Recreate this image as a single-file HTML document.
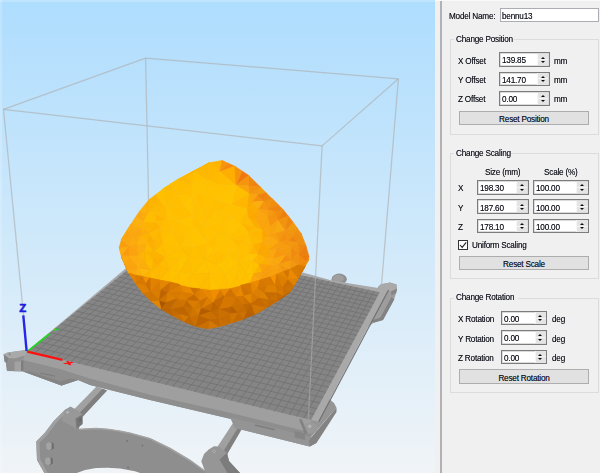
<!DOCTYPE html>
<html><head><meta charset="utf-8"><title>Model View</title>
<style>
html,body{margin:0;padding:0;width:600px;height:473px;overflow:hidden;background:#f0f0f0}
#root{position:relative;width:600px;height:473px;overflow:hidden;font-family:"Liberation Sans",sans-serif}
#vp{position:absolute;left:0;top:0;width:435px;height:473px;background:linear-gradient(#aeddfe 0%,#f0f4f7 100%);overflow:hidden}
#vp svg{position:absolute;left:0;top:0}
#vp .edgeL{position:absolute;left:0;top:0;width:2px;height:473px;background:rgba(255,255,255,.2)}
#vp .edgeT{position:absolute;left:0;top:0;width:435px;height:2px;background:rgba(255,255,255,.22)}
#split{position:absolute;left:440px;top:0;width:1.8px;height:473px;background:#b2b2b6}
#topw{position:absolute;left:435px;top:0;width:165px;height:1.4px;background:#fafafa}
#pn{position:absolute;left:0;top:0;width:600px;height:473px}
.t{position:absolute;white-space:nowrap;font-size:9.8px;line-height:13px;height:13px;color:#14141c;transform:scaleX(.835);transform-origin:0 50%;letter-spacing:-0.25px;text-shadow:0 0 0.6px rgba(10,10,30,.6)}
.t.v{left:2px;top:50%;margin-top:-6.2px}
.t.c{left:50%;top:50%;margin-top:-6.0px;transform:translateX(-50%) scaleX(.835);transform-origin:50% 50%}
.sp,.inp{position:absolute;box-sizing:border-box;background:#fff;border:1px solid #7c7c7c;box-shadow:inset 0 0 0 0.7px #cfcfcf}
.inp{border-color:#abadb3;box-shadow:none}
.inp .t.v{left:0.8px}
.ar{position:absolute;right:0.6px;top:0.6px;bottom:0.6px;width:10.4px;background:#e4e4e4;border-left:1px solid #f6f6f6}
.ar:after{content:"";position:absolute;left:0;right:0;top:50%;margin-top:-0.5px;height:1px;background:#f4f4f4}
.ar b{position:absolute;left:50%;margin-left:-2.3px;width:0;height:0;border-left:2.7px solid transparent;border-right:2.7px solid transparent;z-index:1}
.ar .u{top:2.7px;border-bottom:2.9px solid #0c0c0c}
.ar .d{bottom:2.5px;border-top:2.9px solid #0c0c0c}
.btn{position:absolute;box-sizing:border-box;background:#e1e1e1;border:1px solid #adadad}
.gb{position:absolute;box-sizing:border-box;border:1px solid #dcdcdc}
.gl{position:absolute;background:#f0f0f0}
.cb{position:absolute;box-sizing:border-box;width:10px;height:10px;background:#fff;border:1px solid #333}
.cb svg{position:absolute;left:-1px;top:-1px}
</style></head><body>
<div id="root">
<div id="vp">
<svg width="435" height="473" viewBox="0 0 435 473">
<defs><filter id="soft" x="-5%" y="-5%" width="110%" height="110%"><feGaussianBlur stdDeviation="0.45"/></filter></defs>
<polygon points="65.4,409.5 53.6,421.3 44.7,433.0 36.3,441.5 37.0,460.0 45.0,474.0 74.0,474.0 85.0,470.0 96.0,468.0 108.0,467.8 120.0,468.6 135.0,471.3 143.0,474.0 212.0,474.0 204.0,470.0 190.0,460.0 170.0,448.0 150.0,438.3 130.0,432.8 120.0,430.8 108.6,429.1 96.0,428.0 79.1,429.1 80.0,418.0" fill="#8e8e8e" />
<path d="M79.1,429.6 L96,428.5 L108.6,429.6 L120,431.3 L130,433.3 L150,438.8 L170,448.5 L190,460.5 L204,470.5" fill="none" stroke="#a2a2a2" stroke-width="1.5"/>
<polygon points="49.0,442.2 53.6,443.0 54.0,448.6 50.5,450.2" fill="#6e6e6e" />
<polygon points="46.2,443.6 49.5,442.0 51.6,443.2 51.6,449.0 49.0,450.2 46.2,448.4" fill="#a3a3a3" />
<polygon points="48.0,457.2 52.6,458.0 53.0,463.6 49.5,465.2" fill="#6e6e6e" />
<polygon points="45.2,458.6 48.5,457.0 50.6,458.2 50.6,464.0 48.0,465.2 45.2,463.4" fill="#a3a3a3" />
<circle cx="127" cy="441" r="0.9" fill="#737373"/>
<circle cx="142.4" cy="445.4" r="0.9" fill="#737373"/>
<circle cx="128" cy="467.4" r="0.9" fill="#737373"/>
<polygon points="65.4,409.5 53.6,421.3 44.7,433.0 36.3,441.5 37.0,460.0 45.0,474.0 48.2,474.0 40.2,459.3 39.5,442.7 47.4,434.8 56.0,423.2 67.0,412.0" fill="#a0a0a0" />
<polygon points="96.5,386.5 107.0,390.5 80.5,419.0 71.0,412.6" fill="#a1a1a1" />
<polygon points="102.5,388.8 107.0,390.5 80.5,419.0 76.4,416.3" fill="#7f7f7f" />
<polygon points="65.4,409.5 70.5,406.6 75.0,409.0 82.5,414.5 82.5,424.0 76.5,428.8 61.5,420.5" fill="#989898" />
<polygon points="75.5,418.5 82.5,414.5 82.5,424.0 76.5,428.8" fill="#777777" />
<ellipse cx="80.2" cy="420" rx="1.8" ry="2.6" fill="#6c6c6c"/>
<circle cx="67.6" cy="412.3" r="1.5" fill="#b2b2b2"/>
<polygon points="234.0,421.5 243.5,426.0 227.2,454.0 217.6,446.5" fill="#a0a0a0" />
<polygon points="240.0,424.3 243.5,426.0 227.2,454.0 223.4,451.2" fill="#808080" />
<polygon points="201.3,461.3 204.0,454.0 208.7,449.5 214.0,446.3 219.0,446.5 227.0,452.8 229.0,461.0 241.0,474.0 206.0,474.0" fill="#969696" />
<polygon points="219.5,459.5 227.0,452.8 229.0,461.0 241.0,474.0 228.0,474.0" fill="#7c7c7c" />
<circle cx="214" cy="451.3" r="1.7" fill="#b0b0b0"/><circle cx="214" cy="451.3" r="0.8" fill="#808080"/>
<polygon points="378.0,287.0 381.0,284.3 390.0,282.6 396.5,284.5 397.0,290.0 394.0,299.8 383.0,320.0 373.5,322.8 368.0,327.0" fill="#9d9d9d" />
<polygon points="391.5,297.0 394.2,299.5 383.0,320.0 373.5,322.8 371.5,320.5 380.5,317.5" fill="#828282" />
<polygon points="378.0,287.0 381.0,284.3 390.0,282.6 396.5,284.5 397.0,288.5 391.0,291.5 384.0,291.0" fill="#a9a9a9" />
<polygon points="391.0,291.5 397.0,288.5 396.2,293.0 391.5,295.5" fill="#868686" />
<ellipse cx="339.2" cy="279.2" rx="7.6" ry="5.6" fill="#8f8f8f"/>
<ellipse cx="338.2" cy="278.4" rx="5.6" ry="3.6" fill="#9f9f9f"/>
<polygon points="4.0,355.0 8.0,352.6 25.0,350.3 27.0,351.3 311.0,420.0 311.0,438.5 230.0,418.7 150.0,400.0 90.0,385.0 78.0,379.9 61.5,385.6 22.5,371.3 7.0,371.0 6.0,363.0 4.6,361.6" fill="#939393" />
<polygon points="6.0,363.3 23.0,360.0 60.0,369.0 90.0,378.5 150.0,394.7 230.0,412.7 311.0,432.5 311.0,438.5 230.0,418.7 150.0,400.0 90.0,385.0 78.0,379.9 61.5,385.6 22.5,371.3 7.0,371.0" fill="#8e8e8e" />
<polygon points="22.5,371.3 61.5,385.6 78.0,379.9 70.0,378.2 61.0,381.6 30.0,371.5" fill="#848484" />
<polygon points="27.0,351.3 311.0,420.0 311.0,432.5 230.0,412.7 150.0,394.7 90.0,378.5 60.0,369.0 23.0,360.0 24.5,355.0" fill="#9f9f9f" />
<polygon points="40.0,372.4 55.0,375.6 55.0,376.8 40.0,373.6" fill="#7c7c7c" />
<polygon points="3.5,354.0 9.0,358.3 7.0,363.0 4.6,361.6" fill="#848484" />
<polygon points="3.5,354.0 7.5,352.4 25.0,350.1 27.0,352.3 24.5,355.8 15.0,358.4 9.0,358.6" fill="#a9a9a9" />
<polygon points="9.0,358.6 15.0,358.4 24.5,355.8 23.5,358.5 14.0,361.5 7.5,362.5" fill="#909090" />
<polygon points="14.5,361.8 21.0,361.2 21.0,371.2 14.5,371.2" fill="#a2a2a2" />
<polygon points="21.0,361.2 23.3,360.3 23.3,370.2 21.0,371.2" fill="#7d7d7d" />
<circle cx="9.6" cy="354.2" r="1" fill="#858585"/>
<polygon points="230.3,417.5 311.0,437.0 336.5,407.8 334.0,403.0 327.0,397.0 311.0,420.0 311.0,442.0 316.7,442.8 309.7,446.6 235.0,428.0" fill="#959595" />
<polygon points="230.3,417.5 311.0,437.5 311.0,442.0 316.7,442.8 309.7,446.6 235.0,428.0" fill="#949494" />
<polygon points="311.0,437.5 336.5,407.8 336.5,412.0 316.7,442.8 309.7,446.6 309.0,441.0" fill="#838383" />
<polygon points="254.8,424.3 274.7,429.0 274.7,430.4 254.8,425.7" fill="#7d7d7d" />
<polygon points="294.5,431.0 305.0,433.5 305.0,440.0 294.5,437.5" fill="#858585" />
<polygon points="27.0,351.3 311.0,420.0 318.2,421.6 388.0,289.6 378.3,288.0 350.0,283.6 330.0,280.0 303.0,272.6 157.6,241.6" fill="#a9a9a9" />
<line x1="318.7" y1="421.8" x2="388.6" y2="290.0" stroke="#707070" stroke-width="1.1" />
<polygon points="27.0,351.3 311.0,420.0 379.8,292.2 159.0,244.3" fill="#858585" />
<path d="M34.3,353.1L164.7,245.5M41.6,354.8L170.3,246.8M48.8,356.6L176.0,248.0M56.1,358.3L181.6,249.2M63.4,360.1L187.3,250.4M70.7,361.9L193.0,251.7M78.0,363.6L198.6,252.9M85.3,365.4L204.3,254.1M92.5,367.2L210.0,255.4M99.8,368.9L215.6,256.6M107.1,370.7L221.3,257.8M114.4,372.4L226.9,259.0M121.7,374.2L232.6,260.3M128.9,376.0L238.3,261.5M136.2,377.7L243.9,262.7M143.5,379.5L249.6,264.0M150.8,381.2L255.2,265.2M158.1,383.0L260.9,266.4M165.4,384.8L266.6,267.6M172.6,386.5L272.2,268.9M179.9,388.3L277.9,270.1M187.2,390.1L283.6,271.3M194.5,391.8L289.2,272.5M201.8,393.6L294.9,273.8M209.1,395.3L300.5,275.0M216.3,397.1L306.2,276.2M223.6,398.9L311.9,277.5M230.9,400.6L317.5,278.7M238.2,402.4L323.2,279.9M245.5,404.1L328.8,281.1M252.7,405.9L334.5,282.4M260.0,407.7L340.2,283.6M267.3,409.4L345.8,284.8M274.6,411.2L351.5,286.1M281.9,413.0L357.2,287.3M289.2,414.7L362.8,288.5M296.4,416.5L368.5,289.7M303.7,418.2L374.1,291.0M32.9,346.5L314.1,414.3M38.7,341.8L317.1,408.7M44.4,337.2L320.1,403.1M50.0,332.7L323.0,397.7M55.5,328.2L325.8,392.4M60.9,323.8L328.7,387.2M66.2,319.5L331.4,382.1M71.4,315.3L334.1,377.0M76.5,311.2L336.8,372.1M81.5,307.1L339.4,367.2M86.4,303.1L342.0,362.5M91.3,299.2L344.5,357.8M96.1,295.3L347.0,353.1M100.7,291.5L349.4,348.6M105.4,287.8L351.8,344.1M109.9,284.1L354.2,339.7M114.3,280.5L356.5,335.4M118.7,276.9L358.8,331.2M123.1,273.4L361.1,327.0M127.3,270.0L363.3,322.9M131.5,266.6L365.5,318.8M135.6,263.3L367.6,314.9M139.7,260.0L369.7,310.9M143.6,256.7L371.8,307.1M147.6,253.6L373.8,303.3M151.4,250.4L375.9,299.5M155.2,247.3L377.8,295.8" fill="none" stroke="#727272" stroke-width="0.85"/>
<polygon points="299.0,419.5 301.5,419.0 308.0,433.0 305.0,434.5" fill="#828282" />
<polygon points="304.0,424.5 311.0,422.5 317.0,425.0 317.0,431.0 308.0,434.0" fill="#9a9a9a" />
<circle cx="309.7" cy="426.3" r="1.8" fill="#b4b4b4"/>
<line x1="145.6" y1="58.1" x2="398.4" y2="78.8" stroke="#adadad" stroke-width="1.25" stroke-opacity=".62"/>
<line x1="398.4" y1="78.8" x2="322.1" y2="145.9" stroke="#adadad" stroke-width="1.25" stroke-opacity=".62"/>
<line x1="322.1" y1="145.9" x2="3.5" y2="109.3" stroke="#adadad" stroke-width="1.25" stroke-opacity=".62"/>
<line x1="3.5" y1="109.3" x2="145.6" y2="58.1" stroke="#adadad" stroke-width="1.25" stroke-opacity=".62"/>
<line x1="3.5" y1="109.3" x2="27.0" y2="351.2" stroke="#adadad" stroke-width="1.25" stroke-opacity=".62"/>
<line x1="322.1" y1="145.9" x2="308.4" y2="418.7" stroke="#adadad" stroke-width="1.25" stroke-opacity=".62"/>
<line x1="398.4" y1="78.8" x2="380.8" y2="293.6" stroke="#adadad" stroke-width="1.25" stroke-opacity=".62"/>
<line x1="145.6" y1="58.1" x2="149.6" y2="252.0" stroke="#adadad" stroke-width="1.25" stroke-opacity=".62"/>
<line x1="27.2" y1="351.6" x2="50.0" y2="333.5" stroke="#22d822" stroke-width="1.8" />
<line x1="27.2" y1="351.6" x2="62.4" y2="359.8" stroke="#ff1010" stroke-width="2.4" />
<line x1="26.6" y1="351.0" x2="23.3" y2="315.4" stroke="#2626e8" stroke-width="2.4" />
<text x="19.2" y="312.4" font-family="Liberation Sans, sans-serif" font-weight="bold" font-size="11.5" fill="#1c1ce0" stroke="#1c1ce0" stroke-width="0.5">Z</text>
<text transform="matrix(1,0.24,-0.42,0.35,64,363.4)" font-family="Liberation Sans, sans-serif" font-weight="bold" font-size="10" fill="#ff1010" stroke="#ff1010" stroke-width="1.1">X</text>
<text transform="matrix(0.95,0.12,-0.5,0.42,52.6,330.6)" font-family="Liberation Sans, sans-serif" font-weight="bold" font-size="7" fill="#22d822" stroke="#22d822" stroke-width="0.9">Y</text>
<g filter="url(#soft)"><polygon points="219.9,171.8 209.3,162.8 222.1,160.5" fill="#ffb500" stroke="#ffb500" stroke-width="0.7" stroke-linejoin="round"/><polygon points="207.5,180.1 209.3,162.8 219.9,171.8" fill="#ffb800" stroke="#ffb800" stroke-width="0.7" stroke-linejoin="round"/><polygon points="177.7,179.6 209.3,162.8 186.1,175.3" fill="#ffb800" stroke="#ffb800" stroke-width="0.7" stroke-linejoin="round"/><polygon points="308.8,259.8 306.0,261.0 308.8,256.0" fill="#ee8810" stroke="#ee8810" stroke-width="0.7" stroke-linejoin="round"/><polygon points="177.4,220.6 193.3,227.8 185.9,237.9" fill="#ffc000" stroke="#ffc000" stroke-width="0.7" stroke-linejoin="round"/><polygon points="121.6,239.3 127.4,230.0 133.5,236.4" fill="#fba40b" stroke="#fba40b" stroke-width="0.7" stroke-linejoin="round"/><polygon points="129.1,246.3 121.6,255.6 119.3,247.4" fill="#fcac0c" stroke="#fcac0c" stroke-width="0.7" stroke-linejoin="round"/><polygon points="121.6,239.3 129.1,246.3 119.3,247.4" fill="#fa9d0c" stroke="#fa9d0c" stroke-width="0.7" stroke-linejoin="round"/><polygon points="129.1,246.3 121.6,239.3 133.5,236.4" fill="#fba70b" stroke="#fba70b" stroke-width="0.7" stroke-linejoin="round"/><polygon points="192.5,185.3 177.7,179.6 186.1,175.3" fill="#feb700" stroke="#feb700" stroke-width="0.7" stroke-linejoin="round"/><polygon points="194.6,171.1 192.5,185.3 186.1,175.3" fill="#ffbb00" stroke="#ffbb00" stroke-width="0.7" stroke-linejoin="round"/><polygon points="192.5,185.3 194.6,171.1 207.5,180.1" fill="#ffc000" stroke="#ffc000" stroke-width="0.7" stroke-linejoin="round"/><polygon points="171.5,230.6 177.4,220.6 185.9,237.9" fill="#ffbe00" stroke="#ffbe00" stroke-width="0.7" stroke-linejoin="round"/><polygon points="277.9,204.7 272.1,198.8 283.7,210.5" fill="#ee8c10" stroke="#ee8c10" stroke-width="0.7" stroke-linejoin="round"/><polygon points="272.1,198.8 277.9,204.7 267.2,209.6" fill="#f18f0e" stroke="#f18f0e" stroke-width="0.7" stroke-linejoin="round"/><polygon points="228.5,163.4 219.9,171.8 222.1,160.5" fill="#f7930a" stroke="#f7930a" stroke-width="0.7" stroke-linejoin="round"/><polygon points="228.5,163.4 234.9,166.3 219.9,171.8" fill="#f5890b" stroke="#f5890b" stroke-width="0.7" stroke-linejoin="round"/><polygon points="306.0,261.0 304.9,266.7 298.0,265.0" fill="#ea8801" stroke="#ea8801" stroke-width="0.7" stroke-linejoin="round"/><polygon points="304.9,266.7 306.0,261.0 308.8,259.8" fill="#ef8d01" stroke="#ef8d01" stroke-width="0.7" stroke-linejoin="round"/><polygon points="245.2,273.0 237.1,274.6 239.0,262.5" fill="#ffc000" stroke="#ffc000" stroke-width="0.7" stroke-linejoin="round"/><polygon points="245.2,273.0 251.5,261.0 253.7,274.0" fill="#ffc300" stroke="#ffc300" stroke-width="0.7" stroke-linejoin="round"/><polygon points="251.5,261.0 245.2,273.0 239.0,262.5" fill="#ffc000" stroke="#ffc000" stroke-width="0.7" stroke-linejoin="round"/><polygon points="225.3,274.0 228.3,255.3 239.0,262.5" fill="#ffc400" stroke="#ffc400" stroke-width="0.7" stroke-linejoin="round"/><polygon points="237.1,274.6 225.3,274.0 239.0,262.5" fill="#ffc200" stroke="#ffc200" stroke-width="0.7" stroke-linejoin="round"/><polygon points="183.8,205.0 177.4,220.6 165.7,207.1" fill="#ffbf00" stroke="#ffbf00" stroke-width="0.7" stroke-linejoin="round"/><polygon points="277.9,204.7 274.7,211.6 267.2,209.6" fill="#f0850d" stroke="#f0850d" stroke-width="0.7" stroke-linejoin="round"/><polygon points="274.7,211.6 267.2,217.6 267.2,209.6" fill="#f6990b" stroke="#f6990b" stroke-width="0.7" stroke-linejoin="round"/><polygon points="267.2,217.6 274.7,211.6 278.1,220.3" fill="#f4940b" stroke="#f4940b" stroke-width="0.7" stroke-linejoin="round"/><polygon points="274.7,211.6 277.9,204.7 283.7,210.5" fill="#ee860f" stroke="#ee860f" stroke-width="0.7" stroke-linejoin="round"/><polygon points="278.1,220.3 274.7,211.6 283.7,210.5" fill="#f18c0e" stroke="#f18c0e" stroke-width="0.7" stroke-linejoin="round"/><polygon points="270.1,265.0 270.0,277.0 262.1,271.8" fill="#f89e09" stroke="#f89e09" stroke-width="0.7" stroke-linejoin="round"/><polygon points="257.2,254.6 269.4,249.0 264.8,257.4" fill="#fba806" stroke="#fba806" stroke-width="0.7" stroke-linejoin="round"/><polygon points="270.1,265.0 258.4,264.7 264.8,257.4" fill="#fcaf06" stroke="#fcaf06" stroke-width="0.7" stroke-linejoin="round"/><polygon points="258.4,264.7 270.1,265.0 262.1,271.8" fill="#faa107" stroke="#faa107" stroke-width="0.7" stroke-linejoin="round"/><polygon points="258.4,264.7 257.2,254.6 264.8,257.4" fill="#fdb304" stroke="#fdb304" stroke-width="0.7" stroke-linejoin="round"/><polygon points="257.2,254.6 258.4,264.7 251.5,261.0" fill="#feb603" stroke="#feb603" stroke-width="0.7" stroke-linejoin="round"/><polygon points="258.4,264.7 262.1,271.8 253.7,274.0" fill="#fdb404" stroke="#fdb404" stroke-width="0.7" stroke-linejoin="round"/><polygon points="251.5,261.0 258.4,264.7 253.7,274.0" fill="#ffc000" stroke="#ffc000" stroke-width="0.7" stroke-linejoin="round"/><polygon points="262.0,241.3 257.2,254.6 252.3,244.7" fill="#fdaf04" stroke="#fdaf04" stroke-width="0.7" stroke-linejoin="round"/><polygon points="257.2,254.6 262.0,241.3 269.4,249.0" fill="#fba705" stroke="#fba705" stroke-width="0.7" stroke-linejoin="round"/><polygon points="193.3,227.8 193.5,246.1 185.9,237.9" fill="#ffc100" stroke="#ffc100" stroke-width="0.7" stroke-linejoin="round"/><polygon points="171.5,230.6 180.6,248.1 162.8,242.4" fill="#ffc000" stroke="#ffc000" stroke-width="0.7" stroke-linejoin="round"/><polygon points="180.6,248.1 171.5,230.6 185.9,237.9" fill="#ffbd00" stroke="#ffbd00" stroke-width="0.7" stroke-linejoin="round"/><polygon points="178.3,259.5 180.6,248.1 188.9,256.3" fill="#ffc000" stroke="#ffc000" stroke-width="0.7" stroke-linejoin="round"/><polygon points="193.5,246.1 180.6,248.1 185.9,237.9" fill="#ffc200" stroke="#ffc200" stroke-width="0.7" stroke-linejoin="round"/><polygon points="180.6,248.1 193.5,246.1 188.9,256.3" fill="#ffbd00" stroke="#ffbd00" stroke-width="0.7" stroke-linejoin="round"/><polygon points="168.9,269.1 164.9,257.7 178.3,259.5" fill="#ffbf00" stroke="#ffbf00" stroke-width="0.7" stroke-linejoin="round"/><polygon points="180.6,248.1 164.9,257.7 162.8,242.4" fill="#ffbe01" stroke="#ffbe01" stroke-width="0.7" stroke-linejoin="round"/><polygon points="164.9,257.7 180.6,248.1 178.3,259.5" fill="#ffc000" stroke="#ffc000" stroke-width="0.7" stroke-linejoin="round"/><polygon points="121.6,255.6 121.6,257.0 119.3,247.4" fill="#fca90c" stroke="#fca90c" stroke-width="0.7" stroke-linejoin="round"/><polygon points="121.6,257.0 125.1,264.9 128.6,273.0" fill="#ea8801" stroke="#ea8801" stroke-width="0.7" stroke-linejoin="round"/><polygon points="136.5,244.7 147.2,243.1 145.3,251.2" fill="#fcad07" stroke="#fcad07" stroke-width="0.7" stroke-linejoin="round"/><polygon points="136.5,244.7 129.1,246.3 133.5,236.4" fill="#fcac09" stroke="#fcac09" stroke-width="0.7" stroke-linejoin="round"/><polygon points="155.6,214.1 158.0,204.7 165.7,207.1" fill="#feb803" stroke="#feb803" stroke-width="0.7" stroke-linejoin="round"/><polygon points="158.0,204.7 156.0,194.4 165.7,207.1" fill="#feb703" stroke="#feb703" stroke-width="0.7" stroke-linejoin="round"/><polygon points="156.0,194.4 158.0,204.7 149.1,199.7" fill="#fdb204" stroke="#fdb204" stroke-width="0.7" stroke-linejoin="round"/><polygon points="155.6,214.1 166.4,219.1 155.1,221.9" fill="#fdb303" stroke="#fdb303" stroke-width="0.7" stroke-linejoin="round"/><polygon points="171.5,230.6 166.4,219.1 177.4,220.6" fill="#ffbf00" stroke="#ffbf00" stroke-width="0.7" stroke-linejoin="round"/><polygon points="177.4,220.6 166.4,219.1 165.7,207.1" fill="#ffc001" stroke="#ffc001" stroke-width="0.7" stroke-linejoin="round"/><polygon points="166.4,219.1 155.6,214.1 165.7,207.1" fill="#feba02" stroke="#feba02" stroke-width="0.7" stroke-linejoin="round"/><polygon points="121.6,239.3 131.1,224.0 127.4,230.0" fill="#fca90b" stroke="#fca90b" stroke-width="0.7" stroke-linejoin="round"/><polygon points="177.9,194.6 192.5,185.3 192.5,198.0" fill="#ffbf00" stroke="#ffbf00" stroke-width="0.7" stroke-linejoin="round"/><polygon points="192.5,185.3 177.9,194.6 177.7,179.6" fill="#ffbc00" stroke="#ffbc00" stroke-width="0.7" stroke-linejoin="round"/><polygon points="183.8,205.0 177.9,194.6 192.5,198.0" fill="#ffc100" stroke="#ffc100" stroke-width="0.7" stroke-linejoin="round"/><polygon points="177.9,194.6 170.3,184.3 177.7,179.6" fill="#ffbf00" stroke="#ffbf00" stroke-width="0.7" stroke-linejoin="round"/><polygon points="177.9,194.6 183.8,205.0 165.7,207.1" fill="#ffbf00" stroke="#ffbf00" stroke-width="0.7" stroke-linejoin="round"/><polygon points="201.9,166.9 209.3,162.8 207.5,180.1" fill="#ffb600" stroke="#ffb600" stroke-width="0.7" stroke-linejoin="round"/><polygon points="194.6,171.1 201.9,166.9 207.5,180.1" fill="#ffb800" stroke="#ffb800" stroke-width="0.7" stroke-linejoin="round"/><polygon points="209.3,162.8 201.9,166.9 186.1,175.3" fill="#feb200" stroke="#feb200" stroke-width="0.7" stroke-linejoin="round"/><polygon points="201.9,166.9 194.6,171.1 186.1,175.3" fill="#ffb400" stroke="#ffb400" stroke-width="0.7" stroke-linejoin="round"/><polygon points="243.3,319.1 219.3,326.5 231.6,322.6" fill="#d47701" stroke="#d47701" stroke-width="0.7" stroke-linejoin="round"/><polygon points="250.0,283.0 245.2,273.0 253.7,274.0" fill="#ffc200" stroke="#ffc200" stroke-width="0.7" stroke-linejoin="round"/><polygon points="288.4,216.3 278.1,220.3 283.7,210.5" fill="#ee7f0f" stroke="#ee7f0f" stroke-width="0.7" stroke-linejoin="round"/><polygon points="276.7,274.3 270.0,277.0 270.1,265.0" fill="#f8a00a" stroke="#f8a00a" stroke-width="0.7" stroke-linejoin="round"/><polygon points="276.7,274.3 279.2,263.7 283.3,271.7" fill="#f69c0b" stroke="#f69c0b" stroke-width="0.7" stroke-linejoin="round"/><polygon points="279.2,263.7 276.7,274.3 270.1,265.0" fill="#f8a20a" stroke="#f8a20a" stroke-width="0.7" stroke-linejoin="round"/><polygon points="270.0,277.0 260.0,280.0 262.1,271.8" fill="#f89e09" stroke="#f89e09" stroke-width="0.7" stroke-linejoin="round"/><polygon points="262.1,271.8 260.0,280.0 253.7,274.0" fill="#faa408" stroke="#faa408" stroke-width="0.7" stroke-linejoin="round"/><polygon points="260.0,280.0 250.0,283.0 253.7,274.0" fill="#fba708" stroke="#fba708" stroke-width="0.7" stroke-linejoin="round"/><polygon points="250.0,283.0 260.0,280.0 257.8,288.3" fill="#ec8a01" stroke="#ec8a01" stroke-width="0.7" stroke-linejoin="round"/><polygon points="257.2,254.6 248.5,254.2 252.3,244.7" fill="#feb602" stroke="#feb602" stroke-width="0.7" stroke-linejoin="round"/><polygon points="248.5,254.2 257.2,254.6 251.5,261.0" fill="#ffc300" stroke="#ffc300" stroke-width="0.7" stroke-linejoin="round"/><polygon points="248.5,254.2 251.5,261.0 239.0,262.5" fill="#ffc200" stroke="#ffc200" stroke-width="0.7" stroke-linejoin="round"/><polygon points="248.5,254.2 245.8,240.5 252.3,244.7" fill="#febd00" stroke="#febd00" stroke-width="0.7" stroke-linejoin="round"/><polygon points="270.0,227.0 267.2,217.6 278.1,220.3" fill="#f6950a" stroke="#f6950a" stroke-width="0.7" stroke-linejoin="round"/><polygon points="275.2,233.5 270.0,227.0 278.1,220.3" fill="#f8a20a" stroke="#f8a20a" stroke-width="0.7" stroke-linejoin="round"/><polygon points="267.2,217.6 270.0,227.0 261.9,230.2" fill="#fba408" stroke="#fba408" stroke-width="0.7" stroke-linejoin="round"/><polygon points="267.8,235.1 262.0,241.3 261.9,230.2" fill="#fba606" stroke="#fba606" stroke-width="0.7" stroke-linejoin="round"/><polygon points="270.0,227.0 267.8,235.1 261.9,230.2" fill="#fba607" stroke="#fba607" stroke-width="0.7" stroke-linejoin="round"/><polygon points="267.8,235.1 270.0,227.0 275.2,233.5" fill="#faa308" stroke="#faa308" stroke-width="0.7" stroke-linejoin="round"/><polygon points="262.0,241.3 267.8,235.1 269.4,249.0" fill="#fca907" stroke="#fca907" stroke-width="0.7" stroke-linejoin="round"/><polygon points="285.5,230.3 275.2,233.5 278.1,220.3" fill="#f8a90b" stroke="#f8a90b" stroke-width="0.7" stroke-linejoin="round"/><polygon points="288.4,216.3 285.5,230.3 278.1,220.3" fill="#f2930d" stroke="#f2930d" stroke-width="0.7" stroke-linejoin="round"/><polygon points="279.2,263.7 290.0,269.0 283.3,271.7" fill="#f4960c" stroke="#f4960c" stroke-width="0.7" stroke-linejoin="round"/><polygon points="273.6,257.8 270.1,265.0 264.8,257.4" fill="#fcab08" stroke="#fcab08" stroke-width="0.7" stroke-linejoin="round"/><polygon points="273.6,257.8 279.2,263.7 270.1,265.0" fill="#faa609" stroke="#faa609" stroke-width="0.7" stroke-linejoin="round"/><polygon points="269.4,249.0 273.6,257.8 264.8,257.4" fill="#fba607" stroke="#fba607" stroke-width="0.7" stroke-linejoin="round"/><polygon points="277.2,248.7 273.6,257.8 269.4,249.0" fill="#fba608" stroke="#fba608" stroke-width="0.7" stroke-linejoin="round"/><polygon points="193.5,246.1 205.6,259.5 188.9,256.3" fill="#ffc000" stroke="#ffc000" stroke-width="0.7" stroke-linejoin="round"/><polygon points="183.0,306.5 186.5,299.7 193.1,308.1" fill="#c26701" stroke="#c26701" stroke-width="0.7" stroke-linejoin="round"/><polygon points="189.6,316.3 183.0,306.5 193.1,308.1" fill="#c86e01" stroke="#c86e01" stroke-width="0.7" stroke-linejoin="round"/><polygon points="149.0,233.4 154.4,240.7 147.2,243.1" fill="#fcab05" stroke="#fcab05" stroke-width="0.7" stroke-linejoin="round"/><polygon points="149.0,233.4 143.6,221.3 155.1,221.9" fill="#fdb405" stroke="#fdb405" stroke-width="0.7" stroke-linejoin="round"/><polygon points="129.5,255.9 137.9,267.8 125.1,264.9" fill="#fba40a" stroke="#fba40a" stroke-width="0.7" stroke-linejoin="round"/><polygon points="129.1,246.3 129.5,255.9 121.6,255.6" fill="#f99a0b" stroke="#f99a0b" stroke-width="0.7" stroke-linejoin="round"/><polygon points="129.5,255.9 121.6,257.0 121.6,255.6" fill="#fba10b" stroke="#fba10b" stroke-width="0.7" stroke-linejoin="round"/><polygon points="125.1,264.9 127.5,270.0 128.6,273.0" fill="#e78501" stroke="#e78501" stroke-width="0.7" stroke-linejoin="round"/><polygon points="127.5,270.0 137.9,267.8 128.6,273.0" fill="#fca90a" stroke="#fca90a" stroke-width="0.7" stroke-linejoin="round"/><polygon points="137.9,267.8 127.5,270.0 125.1,264.9" fill="#fba20a" stroke="#fba20a" stroke-width="0.7" stroke-linejoin="round"/><polygon points="166.4,219.1 159.9,228.0 155.1,221.9" fill="#feba03" stroke="#feba03" stroke-width="0.7" stroke-linejoin="round"/><polygon points="159.9,228.0 166.4,219.1 171.5,230.6" fill="#ffbc01" stroke="#ffbc01" stroke-width="0.7" stroke-linejoin="round"/><polygon points="159.9,228.0 149.0,233.4 155.1,221.9" fill="#fdb004" stroke="#fdb004" stroke-width="0.7" stroke-linejoin="round"/><polygon points="149.0,233.4 159.9,228.0 154.4,240.7" fill="#feb904" stroke="#feb904" stroke-width="0.7" stroke-linejoin="round"/><polygon points="159.9,228.0 171.5,230.6 162.8,242.4" fill="#ffbd02" stroke="#ffbd02" stroke-width="0.7" stroke-linejoin="round"/><polygon points="154.4,240.7 159.9,228.0 162.8,242.4" fill="#feb603" stroke="#feb603" stroke-width="0.7" stroke-linejoin="round"/><polygon points="148.0,212.1 155.6,214.1 155.1,221.9" fill="#febb05" stroke="#febb05" stroke-width="0.7" stroke-linejoin="round"/><polygon points="143.6,221.3 148.0,212.1 155.1,221.9" fill="#ffbd06" stroke="#ffbd06" stroke-width="0.7" stroke-linejoin="round"/><polygon points="148.0,212.1 158.0,204.7 155.6,214.1" fill="#feba04" stroke="#feba04" stroke-width="0.7" stroke-linejoin="round"/><polygon points="158.0,204.7 148.0,212.1 149.1,199.7" fill="#fdb505" stroke="#fdb505" stroke-width="0.7" stroke-linejoin="round"/><polygon points="148.0,212.1 144.3,205.5 149.1,199.7" fill="#fcae06" stroke="#fcae06" stroke-width="0.7" stroke-linejoin="round"/><polygon points="139.6,211.3 148.0,212.1 143.6,221.3" fill="#fcac07" stroke="#fcac07" stroke-width="0.7" stroke-linejoin="round"/><polygon points="148.0,212.1 139.6,211.3 144.3,205.5" fill="#fdb207" stroke="#fdb207" stroke-width="0.7" stroke-linejoin="round"/><polygon points="177.9,194.6 162.9,189.1 170.3,184.3" fill="#febb00" stroke="#febb00" stroke-width="0.7" stroke-linejoin="round"/><polygon points="156.0,194.4 162.9,189.1 165.7,207.1" fill="#ffc003" stroke="#ffc003" stroke-width="0.7" stroke-linejoin="round"/><polygon points="162.9,189.1 177.9,194.6 165.7,207.1" fill="#ffbd01" stroke="#ffbd01" stroke-width="0.7" stroke-linejoin="round"/><polygon points="170.3,184.3 162.9,189.1 177.7,179.6" fill="#ffbc00" stroke="#ffbc00" stroke-width="0.7" stroke-linejoin="round"/><polygon points="276.7,274.3 275.1,285.8 270.0,277.0" fill="#f79401" stroke="#f79401" stroke-width="0.7" stroke-linejoin="round"/><polygon points="275.1,285.8 276.7,274.3 282.8,287.4" fill="#d77901" stroke="#d77901" stroke-width="0.7" stroke-linejoin="round"/><polygon points="209.8,320.1 219.3,326.5 207.7,328.8" fill="#d47701" stroke="#d47701" stroke-width="0.7" stroke-linejoin="round"/><polygon points="251.5,303.7 243.8,304.7 243.4,295.9" fill="#cc7001" stroke="#cc7001" stroke-width="0.7" stroke-linejoin="round"/><polygon points="258.9,298.1 257.8,288.3 264.6,292.6" fill="#dd7f01" stroke="#dd7f01" stroke-width="0.7" stroke-linejoin="round"/><polygon points="245.2,273.0 240.0,285.5 237.1,274.6" fill="#ffc100" stroke="#ffc100" stroke-width="0.7" stroke-linejoin="round"/><polygon points="250.0,283.0 240.0,285.5 245.2,273.0" fill="#ffc000" stroke="#ffc000" stroke-width="0.7" stroke-linejoin="round"/><polygon points="251.9,293.8 250.0,283.0 257.8,288.3" fill="#e78601" stroke="#e78601" stroke-width="0.7" stroke-linejoin="round"/><polygon points="258.9,298.1 251.9,293.8 257.8,288.3" fill="#dd7f01" stroke="#dd7f01" stroke-width="0.7" stroke-linejoin="round"/><polygon points="240.0,285.5 251.9,293.8 243.4,295.9" fill="#d07301" stroke="#d07301" stroke-width="0.7" stroke-linejoin="round"/><polygon points="251.9,293.8 240.0,285.5 250.0,283.0" fill="#d77801" stroke="#d77801" stroke-width="0.7" stroke-linejoin="round"/><polygon points="251.9,293.8 251.5,303.7 243.4,295.9" fill="#e58601" stroke="#e58601" stroke-width="0.7" stroke-linejoin="round"/><polygon points="251.9,293.8 258.9,298.1 251.5,303.7" fill="#d77a01" stroke="#d77a01" stroke-width="0.7" stroke-linejoin="round"/><polygon points="201.3,308.2 213.0,301.9 211.2,311.5" fill="#c86d01" stroke="#c86d01" stroke-width="0.7" stroke-linejoin="round"/><polygon points="205.6,259.5 207.5,242.3 214.6,251.0" fill="#ffc300" stroke="#ffc300" stroke-width="0.7" stroke-linejoin="round"/><polygon points="207.5,242.3 205.6,259.5 193.5,246.1" fill="#ffbe00" stroke="#ffbe00" stroke-width="0.7" stroke-linejoin="round"/><polygon points="207.5,242.3 193.5,246.1 193.3,227.8" fill="#ffc400" stroke="#ffc400" stroke-width="0.7" stroke-linejoin="round"/><polygon points="204.4,225.6 207.5,242.3 193.3,227.8" fill="#ffc000" stroke="#ffc000" stroke-width="0.7" stroke-linejoin="round"/><polygon points="202.5,191.1 205.0,211.0 192.5,198.0" fill="#ffbf00" stroke="#ffbf00" stroke-width="0.7" stroke-linejoin="round"/><polygon points="192.5,185.3 202.5,191.1 192.5,198.0" fill="#ffc100" stroke="#ffc100" stroke-width="0.7" stroke-linejoin="round"/><polygon points="202.5,191.1 192.5,185.3 207.5,180.1" fill="#ffc100" stroke="#ffc100" stroke-width="0.7" stroke-linejoin="round"/><polygon points="192.8,215.4 183.8,205.0 192.5,198.0" fill="#ffc400" stroke="#ffc400" stroke-width="0.7" stroke-linejoin="round"/><polygon points="205.0,211.0 192.8,215.4 192.5,198.0" fill="#ffc000" stroke="#ffc000" stroke-width="0.7" stroke-linejoin="round"/><polygon points="192.8,215.4 193.3,227.8 177.4,220.6" fill="#ffc300" stroke="#ffc300" stroke-width="0.7" stroke-linejoin="round"/><polygon points="183.8,205.0 192.8,215.4 177.4,220.6" fill="#ffbe00" stroke="#ffbe00" stroke-width="0.7" stroke-linejoin="round"/><polygon points="192.8,215.4 204.4,225.6 193.3,227.8" fill="#ffbe00" stroke="#ffbe00" stroke-width="0.7" stroke-linejoin="round"/><polygon points="192.8,215.4 205.0,211.0 204.4,225.6" fill="#ffc000" stroke="#ffc000" stroke-width="0.7" stroke-linejoin="round"/><polygon points="229.3,237.6 228.3,255.3 214.6,251.0" fill="#ffc100" stroke="#ffc100" stroke-width="0.7" stroke-linejoin="round"/><polygon points="258.0,194.9 260.5,187.2 266.3,193.0" fill="#f29b0f" stroke="#f29b0f" stroke-width="0.7" stroke-linejoin="round"/><polygon points="258.0,194.9 249.1,193.7 260.5,187.2" fill="#f4990c" stroke="#f4990c" stroke-width="0.7" stroke-linejoin="round"/><polygon points="248.3,185.7 254.7,181.4 260.5,187.2" fill="#ef830e" stroke="#ef830e" stroke-width="0.7" stroke-linejoin="round"/><polygon points="249.1,193.7 248.3,185.7 260.5,187.2" fill="#f4920c" stroke="#f4920c" stroke-width="0.7" stroke-linejoin="round"/><polygon points="254.7,181.4 248.3,185.7 248.8,175.6" fill="#f0870e" stroke="#f0870e" stroke-width="0.7" stroke-linejoin="round"/><polygon points="255.4,220.2 267.2,217.6 261.9,230.2" fill="#fba407" stroke="#fba407" stroke-width="0.7" stroke-linejoin="round"/><polygon points="285.5,230.3 293.0,222.1 297.1,227.9" fill="#f29a0f" stroke="#f29a0f" stroke-width="0.7" stroke-linejoin="round"/><polygon points="293.0,222.1 285.5,230.3 288.4,216.3" fill="#ef860f" stroke="#ef860f" stroke-width="0.7" stroke-linejoin="round"/><polygon points="290.0,269.0 288.3,279.6 283.3,271.7" fill="#d57601" stroke="#d57601" stroke-width="0.7" stroke-linejoin="round"/><polygon points="288.3,279.6 276.7,274.3 283.3,271.7" fill="#e68501" stroke="#e68501" stroke-width="0.7" stroke-linejoin="round"/><polygon points="276.7,274.3 288.3,279.6 282.8,287.4" fill="#de7f01" stroke="#de7f01" stroke-width="0.7" stroke-linejoin="round"/><polygon points="298.6,253.4 306.0,261.0 298.0,265.0" fill="#f08b0e" stroke="#f08b0e" stroke-width="0.7" stroke-linejoin="round"/><polygon points="306.0,261.0 298.6,253.4 308.8,256.0" fill="#ed7b0f" stroke="#ed7b0f" stroke-width="0.7" stroke-linejoin="round"/><polygon points="267.8,235.1 279.4,241.5 269.4,249.0" fill="#fba908" stroke="#fba908" stroke-width="0.7" stroke-linejoin="round"/><polygon points="279.4,241.5 277.2,248.7 269.4,249.0" fill="#f99c09" stroke="#f99c09" stroke-width="0.7" stroke-linejoin="round"/><polygon points="279.4,241.5 267.8,235.1 275.2,233.5" fill="#f9a109" stroke="#f9a109" stroke-width="0.7" stroke-linejoin="round"/><polygon points="285.5,230.3 279.4,241.5 275.2,233.5" fill="#f6980a" stroke="#f6980a" stroke-width="0.7" stroke-linejoin="round"/><polygon points="287.7,240.8 279.4,241.5 285.5,230.3" fill="#f4900b" stroke="#f4900b" stroke-width="0.7" stroke-linejoin="round"/><polygon points="209.0,272.9 225.3,274.0 220.0,288.8" fill="#ffc000" stroke="#ffc000" stroke-width="0.7" stroke-linejoin="round"/><polygon points="179.6,272.7 168.9,269.1 178.3,259.5" fill="#ffc000" stroke="#ffc000" stroke-width="0.7" stroke-linejoin="round"/><polygon points="179.6,272.7 178.3,259.5 188.9,256.3" fill="#ffc400" stroke="#ffc400" stroke-width="0.7" stroke-linejoin="round"/><polygon points="158.6,299.9 166.4,302.5 161.2,309.1" fill="#ab5401" stroke="#ab5401" stroke-width="0.7" stroke-linejoin="round"/><polygon points="166.4,302.5 158.6,299.9 167.9,292.2" fill="#ce7201" stroke="#ce7201" stroke-width="0.7" stroke-linejoin="round"/><polygon points="182.3,292.0 180.0,284.5 190.0,287.0" fill="#e88601" stroke="#e88601" stroke-width="0.7" stroke-linejoin="round"/><polygon points="194.6,294.5 182.3,292.0 190.0,287.0" fill="#eb8a01" stroke="#eb8a01" stroke-width="0.7" stroke-linejoin="round"/><polygon points="182.3,292.0 194.6,294.5 186.5,299.7" fill="#db7c01" stroke="#db7c01" stroke-width="0.7" stroke-linejoin="round"/><polygon points="180.0,284.5 182.3,292.0 167.9,292.2" fill="#df7f01" stroke="#df7f01" stroke-width="0.7" stroke-linejoin="round"/><polygon points="201.3,308.2 198.8,316.0 193.1,308.1" fill="#d97c01" stroke="#d97c01" stroke-width="0.7" stroke-linejoin="round"/><polygon points="198.8,316.0 189.6,316.3 193.1,308.1" fill="#d07501" stroke="#d07501" stroke-width="0.7" stroke-linejoin="round"/><polygon points="198.8,316.0 201.3,308.2 211.2,311.5" fill="#b45c01" stroke="#b45c01" stroke-width="0.7" stroke-linejoin="round"/><polygon points="209.8,320.1 198.8,316.0 211.2,311.5" fill="#cc7101" stroke="#cc7101" stroke-width="0.7" stroke-linejoin="round"/><polygon points="172.8,316.0 180.2,313.6 184.4,321.9" fill="#cb7001" stroke="#cb7001" stroke-width="0.7" stroke-linejoin="round"/><polygon points="180.2,313.6 189.6,316.3 184.4,321.9" fill="#d37801" stroke="#d37801" stroke-width="0.7" stroke-linejoin="round"/><polygon points="189.6,316.3 180.2,313.6 183.0,306.5" fill="#bf6501" stroke="#bf6501" stroke-width="0.7" stroke-linejoin="round"/><polygon points="141.4,235.2 149.0,233.4 147.2,243.1" fill="#fdb306" stroke="#fdb306" stroke-width="0.7" stroke-linejoin="round"/><polygon points="141.4,235.2 136.5,244.7 133.5,236.4" fill="#fca908" stroke="#fca908" stroke-width="0.7" stroke-linejoin="round"/><polygon points="136.5,244.7 141.4,235.2 147.2,243.1" fill="#fdb207" stroke="#fdb207" stroke-width="0.7" stroke-linejoin="round"/><polygon points="142.5,276.5 137.9,267.8 151.2,269.7" fill="#feb707" stroke="#feb707" stroke-width="0.7" stroke-linejoin="round"/><polygon points="160.0,280.0 160.5,289.3 150.1,291.2" fill="#db7c01" stroke="#db7c01" stroke-width="0.7" stroke-linejoin="round"/><polygon points="158.6,299.9 160.5,289.3 167.9,292.2" fill="#bf6401" stroke="#bf6401" stroke-width="0.7" stroke-linejoin="round"/><polygon points="160.5,289.3 158.6,299.9 150.1,291.2" fill="#da7c01" stroke="#da7c01" stroke-width="0.7" stroke-linejoin="round"/><polygon points="170.0,282.0 160.0,280.0 168.9,269.1" fill="#ffbe01" stroke="#ffbe01" stroke-width="0.7" stroke-linejoin="round"/><polygon points="179.6,272.7 170.0,282.0 168.9,269.1" fill="#ffc200" stroke="#ffc200" stroke-width="0.7" stroke-linejoin="round"/><polygon points="170.0,282.0 179.6,272.7 180.0,284.5" fill="#ffbe00" stroke="#ffbe00" stroke-width="0.7" stroke-linejoin="round"/><polygon points="170.0,282.0 180.0,284.5 167.9,292.2" fill="#d77801" stroke="#d77801" stroke-width="0.7" stroke-linejoin="round"/><polygon points="160.5,289.3 170.0,282.0 167.9,292.2" fill="#cc6e01" stroke="#cc6e01" stroke-width="0.7" stroke-linejoin="round"/><polygon points="170.0,282.0 160.5,289.3 160.0,280.0" fill="#e78601" stroke="#e78601" stroke-width="0.7" stroke-linejoin="round"/><polygon points="152.7,258.9 158.7,265.8 151.2,269.7" fill="#fdb204" stroke="#fdb204" stroke-width="0.7" stroke-linejoin="round"/><polygon points="158.7,265.8 152.7,258.9 164.9,257.7" fill="#fdaf03" stroke="#fdaf03" stroke-width="0.7" stroke-linejoin="round"/><polygon points="158.7,265.8 164.9,257.7 168.9,269.1" fill="#febb02" stroke="#febb02" stroke-width="0.7" stroke-linejoin="round"/><polygon points="158.7,265.8 160.0,280.0 151.2,269.7" fill="#feb804" stroke="#feb804" stroke-width="0.7" stroke-linejoin="round"/><polygon points="160.0,280.0 158.7,265.8 168.9,269.1" fill="#feb902" stroke="#feb902" stroke-width="0.7" stroke-linejoin="round"/><polygon points="129.5,255.9 138.4,255.3 137.9,267.8" fill="#fdae09" stroke="#fdae09" stroke-width="0.7" stroke-linejoin="round"/><polygon points="138.4,255.3 136.5,244.7 145.3,251.2" fill="#fcac08" stroke="#fcac08" stroke-width="0.7" stroke-linejoin="round"/><polygon points="136.5,244.7 138.4,255.3 129.1,246.3" fill="#fba409" stroke="#fba409" stroke-width="0.7" stroke-linejoin="round"/><polygon points="138.4,255.3 129.5,255.9 129.1,246.3" fill="#fba20a" stroke="#fba20a" stroke-width="0.7" stroke-linejoin="round"/><polygon points="137.9,267.8 145.2,262.6 151.2,269.7" fill="#fcad07" stroke="#fcad07" stroke-width="0.7" stroke-linejoin="round"/><polygon points="145.2,262.6 152.7,258.9 151.2,269.7" fill="#ffbd05" stroke="#ffbd05" stroke-width="0.7" stroke-linejoin="round"/><polygon points="138.4,255.3 145.2,262.6 137.9,267.8" fill="#fdaf08" stroke="#fdaf08" stroke-width="0.7" stroke-linejoin="round"/><polygon points="152.7,258.9 145.2,262.6 145.3,251.2" fill="#feba06" stroke="#feba06" stroke-width="0.7" stroke-linejoin="round"/><polygon points="145.2,262.6 138.4,255.3 145.3,251.2" fill="#fdb307" stroke="#fdb307" stroke-width="0.7" stroke-linejoin="round"/><polygon points="164.9,257.7 154.1,251.3 162.8,242.4" fill="#ffbd03" stroke="#ffbd03" stroke-width="0.7" stroke-linejoin="round"/><polygon points="152.7,258.9 154.1,251.3 164.9,257.7" fill="#fdb304" stroke="#fdb304" stroke-width="0.7" stroke-linejoin="round"/><polygon points="154.1,251.3 154.4,240.7 162.8,242.4" fill="#fdb504" stroke="#fdb504" stroke-width="0.7" stroke-linejoin="round"/><polygon points="154.1,251.3 152.7,258.9 145.3,251.2" fill="#fdb405" stroke="#fdb405" stroke-width="0.7" stroke-linejoin="round"/><polygon points="147.2,243.1 154.1,251.3 145.3,251.2" fill="#feba06" stroke="#feba06" stroke-width="0.7" stroke-linejoin="round"/><polygon points="154.4,240.7 154.1,251.3 147.2,243.1" fill="#fdb005" stroke="#fdb005" stroke-width="0.7" stroke-linejoin="round"/><polygon points="121.6,257.0 124.5,263.5 125.1,264.9" fill="#e78501" stroke="#e78501" stroke-width="0.7" stroke-linejoin="round"/><polygon points="124.5,263.5 129.5,255.9 125.1,264.9" fill="#fba10b" stroke="#fba10b" stroke-width="0.7" stroke-linejoin="round"/><polygon points="129.5,255.9 124.5,263.5 121.6,257.0" fill="#fcaa0b" stroke="#fcaa0b" stroke-width="0.7" stroke-linejoin="round"/><polygon points="135.3,217.7 139.6,211.3 143.6,221.3" fill="#fba708" stroke="#fba708" stroke-width="0.7" stroke-linejoin="round"/><polygon points="275.1,285.8 267.3,285.3 270.0,277.0" fill="#d87901" stroke="#d87901" stroke-width="0.7" stroke-linejoin="round"/><polygon points="267.3,285.3 260.0,280.0 270.0,277.0" fill="#da7a01" stroke="#da7a01" stroke-width="0.7" stroke-linejoin="round"/><polygon points="257.8,288.3 267.3,285.3 264.6,292.6" fill="#d27501" stroke="#d27501" stroke-width="0.7" stroke-linejoin="round"/><polygon points="260.0,280.0 267.3,285.3 257.8,288.3" fill="#d77801" stroke="#d77801" stroke-width="0.7" stroke-linejoin="round"/><polygon points="276.8,293.1 275.1,285.8 282.8,287.4" fill="#d37601" stroke="#d37601" stroke-width="0.7" stroke-linejoin="round"/><polygon points="267.3,285.3 276.8,293.1 264.6,292.6" fill="#de8001" stroke="#de8001" stroke-width="0.7" stroke-linejoin="round"/><polygon points="276.8,293.1 267.3,285.3 275.1,285.8" fill="#e08101" stroke="#e08101" stroke-width="0.7" stroke-linejoin="round"/><polygon points="246.3,312.0 251.5,303.7 254.9,314.4" fill="#bb6301" stroke="#bb6301" stroke-width="0.7" stroke-linejoin="round"/><polygon points="246.3,312.0 243.8,304.7 251.5,303.7" fill="#c06701" stroke="#c06701" stroke-width="0.7" stroke-linejoin="round"/><polygon points="243.3,319.1 246.3,312.0 254.9,314.4" fill="#b86001" stroke="#b86001" stroke-width="0.7" stroke-linejoin="round"/><polygon points="269.3,300.0 258.9,298.1 264.6,292.6" fill="#df8101" stroke="#df8101" stroke-width="0.7" stroke-linejoin="round"/><polygon points="276.8,293.1 269.3,300.0 264.6,292.6" fill="#c76c01" stroke="#c76c01" stroke-width="0.7" stroke-linejoin="round"/><polygon points="269.3,300.0 276.8,293.1 278.1,300.5" fill="#cb7101" stroke="#cb7101" stroke-width="0.7" stroke-linejoin="round"/><polygon points="235.7,297.1 240.0,285.5 243.4,295.9" fill="#ea8901" stroke="#ea8901" stroke-width="0.7" stroke-linejoin="round"/><polygon points="243.8,304.7 235.7,297.1 243.4,295.9" fill="#d47601" stroke="#d47601" stroke-width="0.7" stroke-linejoin="round"/><polygon points="235.7,297.1 243.8,304.7 231.6,306.4" fill="#ce7101" stroke="#ce7101" stroke-width="0.7" stroke-linejoin="round"/><polygon points="219.1,318.7 209.8,320.1 211.2,311.5" fill="#cb7001" stroke="#cb7001" stroke-width="0.7" stroke-linejoin="round"/><polygon points="209.8,320.1 219.1,318.7 219.3,326.5" fill="#c16701" stroke="#c16701" stroke-width="0.7" stroke-linejoin="round"/><polygon points="219.3,326.5 219.1,318.7 231.6,322.6" fill="#c96e01" stroke="#c96e01" stroke-width="0.7" stroke-linejoin="round"/><polygon points="219.1,318.7 230.0,313.7 231.6,322.6" fill="#c66c01" stroke="#c66c01" stroke-width="0.7" stroke-linejoin="round"/><polygon points="224.3,295.6 213.0,301.9 220.0,288.8" fill="#d97a01" stroke="#d97a01" stroke-width="0.7" stroke-linejoin="round"/><polygon points="224.3,295.6 235.7,297.1 231.6,306.4" fill="#d57701" stroke="#d57701" stroke-width="0.7" stroke-linejoin="round"/><polygon points="230.0,313.7 218.8,308.8 231.6,306.4" fill="#bd6401" stroke="#bd6401" stroke-width="0.7" stroke-linejoin="round"/><polygon points="218.8,308.8 224.3,295.6 231.6,306.4" fill="#d67801" stroke="#d67801" stroke-width="0.7" stroke-linejoin="round"/><polygon points="224.3,295.6 218.8,308.8 213.0,301.9" fill="#c56901" stroke="#c56901" stroke-width="0.7" stroke-linejoin="round"/><polygon points="213.0,301.9 218.8,308.8 211.2,311.5" fill="#be6401" stroke="#be6401" stroke-width="0.7" stroke-linejoin="round"/><polygon points="218.8,308.8 219.1,318.7 211.2,311.5" fill="#c26901" stroke="#c26901" stroke-width="0.7" stroke-linejoin="round"/><polygon points="219.1,318.7 218.8,308.8 230.0,313.7" fill="#cb7001" stroke="#cb7001" stroke-width="0.7" stroke-linejoin="round"/><polygon points="229.3,237.6 237.8,247.1 228.3,255.3" fill="#ffc100" stroke="#ffc100" stroke-width="0.7" stroke-linejoin="round"/><polygon points="237.8,247.1 229.3,237.6 245.8,240.5" fill="#febb00" stroke="#febb00" stroke-width="0.7" stroke-linejoin="round"/><polygon points="248.5,254.2 237.8,247.1 245.8,240.5" fill="#ffbe00" stroke="#ffbe00" stroke-width="0.7" stroke-linejoin="round"/><polygon points="228.3,255.3 237.8,247.1 239.0,262.5" fill="#ffc000" stroke="#ffc000" stroke-width="0.7" stroke-linejoin="round"/><polygon points="237.8,247.1 248.5,254.2 239.0,262.5" fill="#ffbf00" stroke="#ffbf00" stroke-width="0.7" stroke-linejoin="round"/><polygon points="207.5,242.3 217.9,233.7 214.6,251.0" fill="#ffbe00" stroke="#ffbe00" stroke-width="0.7" stroke-linejoin="round"/><polygon points="217.9,233.7 229.3,237.6 214.6,251.0" fill="#ffc200" stroke="#ffc200" stroke-width="0.7" stroke-linejoin="round"/><polygon points="217.9,233.7 207.5,242.3 204.4,225.6" fill="#ffc100" stroke="#ffc100" stroke-width="0.7" stroke-linejoin="round"/><polygon points="258.0,194.9 252.3,202.2 249.1,193.7" fill="#f9a40a" stroke="#f9a40a" stroke-width="0.7" stroke-linejoin="round"/><polygon points="235.9,185.3 241.9,170.9 248.8,175.6" fill="#f1780c" stroke="#f1780c" stroke-width="0.7" stroke-linejoin="round"/><polygon points="248.3,185.7 235.9,185.3 248.8,175.6" fill="#f6940b" stroke="#f6940b" stroke-width="0.7" stroke-linejoin="round"/><polygon points="234.9,166.3 235.9,185.3 219.9,171.8" fill="#feae03" stroke="#feae03" stroke-width="0.7" stroke-linejoin="round"/><polygon points="241.9,170.9 235.9,185.3 234.9,166.3" fill="#f6930b" stroke="#f6930b" stroke-width="0.7" stroke-linejoin="round"/><polygon points="235.9,185.3 248.3,185.7 249.1,193.7" fill="#faa309" stroke="#faa309" stroke-width="0.7" stroke-linejoin="round"/><polygon points="231.1,204.7 235.9,185.3 249.1,193.7" fill="#ffbd00" stroke="#ffbd00" stroke-width="0.7" stroke-linejoin="round"/><polygon points="216.1,212.2 231.1,204.7 230.8,216.9" fill="#ffc100" stroke="#ffc100" stroke-width="0.7" stroke-linejoin="round"/><polygon points="205.0,211.0 216.1,212.2 204.4,225.6" fill="#ffbe00" stroke="#ffbe00" stroke-width="0.7" stroke-linejoin="round"/><polygon points="254.5,227.6 255.4,220.2 261.9,230.2" fill="#fcaf05" stroke="#fcaf05" stroke-width="0.7" stroke-linejoin="round"/><polygon points="255.4,220.2 254.5,227.6 248.4,217.4" fill="#fcae04" stroke="#fcae04" stroke-width="0.7" stroke-linejoin="round"/><polygon points="298.6,253.4 305.8,245.3 308.8,256.0" fill="#ed800f" stroke="#ed800f" stroke-width="0.7" stroke-linejoin="round"/><polygon points="305.8,245.3 298.6,253.4 297.9,242.9" fill="#ef860f" stroke="#ef860f" stroke-width="0.7" stroke-linejoin="round"/><polygon points="287.7,240.8 293.2,235.4 297.9,242.9" fill="#f0850d" stroke="#f0850d" stroke-width="0.7" stroke-linejoin="round"/><polygon points="293.2,235.4 285.5,230.3 297.1,227.9" fill="#f2970e" stroke="#f2970e" stroke-width="0.7" stroke-linejoin="round"/><polygon points="293.2,235.4 287.7,240.8 285.5,230.3" fill="#f3940d" stroke="#f3940d" stroke-width="0.7" stroke-linejoin="round"/><polygon points="279.4,241.5 290.9,247.6 277.2,248.7" fill="#f79c0b" stroke="#f79c0b" stroke-width="0.7" stroke-linejoin="round"/><polygon points="290.9,247.6 279.4,241.5 287.7,240.8" fill="#f5960b" stroke="#f5960b" stroke-width="0.7" stroke-linejoin="round"/><polygon points="290.9,247.6 287.7,240.8 297.9,242.9" fill="#f3970d" stroke="#f3970d" stroke-width="0.7" stroke-linejoin="round"/><polygon points="298.6,253.4 290.9,247.6 297.9,242.9" fill="#f2930e" stroke="#f2930e" stroke-width="0.7" stroke-linejoin="round"/><polygon points="209.0,272.9 217.0,265.0 225.3,274.0" fill="#ffc100" stroke="#ffc100" stroke-width="0.7" stroke-linejoin="round"/><polygon points="217.0,265.0 209.0,272.9 205.6,259.5" fill="#ffc100" stroke="#ffc100" stroke-width="0.7" stroke-linejoin="round"/><polygon points="217.0,265.0 205.6,259.5 214.6,251.0" fill="#ffbe00" stroke="#ffbe00" stroke-width="0.7" stroke-linejoin="round"/><polygon points="228.3,255.3 217.0,265.0 214.6,251.0" fill="#ffbe00" stroke="#ffbe00" stroke-width="0.7" stroke-linejoin="round"/><polygon points="225.3,274.0 217.0,265.0 228.3,255.3" fill="#ffc400" stroke="#ffc400" stroke-width="0.7" stroke-linejoin="round"/><polygon points="192.1,273.7 179.6,272.7 188.9,256.3" fill="#ffbd00" stroke="#ffbd00" stroke-width="0.7" stroke-linejoin="round"/><polygon points="205.6,259.5 192.1,273.7 188.9,256.3" fill="#ffc000" stroke="#ffc000" stroke-width="0.7" stroke-linejoin="round"/><polygon points="209.0,272.9 192.1,273.7 205.6,259.5" fill="#ffc200" stroke="#ffc200" stroke-width="0.7" stroke-linejoin="round"/><polygon points="180.0,284.5 192.1,273.7 190.0,287.0" fill="#ffbe00" stroke="#ffbe00" stroke-width="0.7" stroke-linejoin="round"/><polygon points="179.6,272.7 192.1,273.7 180.0,284.5" fill="#ffc100" stroke="#ffc100" stroke-width="0.7" stroke-linejoin="round"/><polygon points="150.7,300.9 158.6,299.9 161.2,309.1" fill="#e28501" stroke="#e28501" stroke-width="0.7" stroke-linejoin="round"/><polygon points="150.7,300.9 142.6,292.8 150.1,291.2" fill="#d27601" stroke="#d27601" stroke-width="0.7" stroke-linejoin="round"/><polygon points="158.6,299.9 150.7,300.9 150.1,291.2" fill="#d07401" stroke="#d07401" stroke-width="0.7" stroke-linejoin="round"/><polygon points="199.5,300.6 201.3,308.2 193.1,308.1" fill="#d47801" stroke="#d47801" stroke-width="0.7" stroke-linejoin="round"/><polygon points="186.5,299.7 199.5,300.6 193.1,308.1" fill="#d97b01" stroke="#d97b01" stroke-width="0.7" stroke-linejoin="round"/><polygon points="194.6,294.5 199.5,300.6 186.5,299.7" fill="#c66a01" stroke="#c66a01" stroke-width="0.7" stroke-linejoin="round"/><polygon points="207.5,296.6 213.0,301.9 201.3,308.2" fill="#de7f01" stroke="#de7f01" stroke-width="0.7" stroke-linejoin="round"/><polygon points="199.5,300.6 207.5,296.6 201.3,308.2" fill="#cd7001" stroke="#cd7001" stroke-width="0.7" stroke-linejoin="round"/><polygon points="200.0,288.2 194.6,294.5 190.0,287.0" fill="#d07101" stroke="#d07101" stroke-width="0.7" stroke-linejoin="round"/><polygon points="192.1,273.7 200.0,288.2 190.0,287.0" fill="#ffc000" stroke="#ffc000" stroke-width="0.7" stroke-linejoin="round"/><polygon points="200.0,288.2 192.1,273.7 209.0,272.9" fill="#ffbd00" stroke="#ffbd00" stroke-width="0.7" stroke-linejoin="round"/><polygon points="200.0,288.2 199.5,300.6 194.6,294.5" fill="#dc7d01" stroke="#dc7d01" stroke-width="0.7" stroke-linejoin="round"/><polygon points="200.0,288.2 207.5,296.6 199.5,300.6" fill="#e28201" stroke="#e28201" stroke-width="0.7" stroke-linejoin="round"/><polygon points="177.2,298.7 166.4,302.5 167.9,292.2" fill="#dc7e01" stroke="#dc7e01" stroke-width="0.7" stroke-linejoin="round"/><polygon points="182.3,292.0 177.2,298.7 167.9,292.2" fill="#d87a01" stroke="#d87a01" stroke-width="0.7" stroke-linejoin="round"/><polygon points="177.2,298.7 186.5,299.7 183.0,306.5" fill="#d17501" stroke="#d17501" stroke-width="0.7" stroke-linejoin="round"/><polygon points="177.2,298.7 182.3,292.0 186.5,299.7" fill="#dc7e01" stroke="#dc7e01" stroke-width="0.7" stroke-linejoin="round"/><polygon points="189.6,316.3 196.0,326.5 184.4,321.9" fill="#c16701" stroke="#c16701" stroke-width="0.7" stroke-linejoin="round"/><polygon points="198.8,316.0 196.0,326.5 189.6,316.3" fill="#cb7001" stroke="#cb7001" stroke-width="0.7" stroke-linejoin="round"/><polygon points="196.0,326.5 209.8,320.1 207.7,328.8" fill="#cb6f01" stroke="#cb6f01" stroke-width="0.7" stroke-linejoin="round"/><polygon points="196.0,326.5 198.8,316.0 209.8,320.1" fill="#bc6301" stroke="#bc6301" stroke-width="0.7" stroke-linejoin="round"/><polygon points="170.7,308.7 180.2,313.6 172.8,316.0" fill="#c56b01" stroke="#c56b01" stroke-width="0.7" stroke-linejoin="round"/><polygon points="166.4,302.5 170.7,308.7 161.2,309.1" fill="#c16801" stroke="#c16801" stroke-width="0.7" stroke-linejoin="round"/><polygon points="170.7,308.7 172.8,316.0 161.2,309.1" fill="#be6501" stroke="#be6501" stroke-width="0.7" stroke-linejoin="round"/><polygon points="177.2,298.7 170.7,308.7 166.4,302.5" fill="#c06701" stroke="#c06701" stroke-width="0.7" stroke-linejoin="round"/><polygon points="180.2,313.6 170.7,308.7 183.0,306.5" fill="#be6501" stroke="#be6501" stroke-width="0.7" stroke-linejoin="round"/><polygon points="170.7,308.7 177.2,298.7 183.0,306.5" fill="#cd7201" stroke="#cd7201" stroke-width="0.7" stroke-linejoin="round"/><polygon points="149.0,233.4 138.3,227.3 143.6,221.3" fill="#fdb107" stroke="#fdb107" stroke-width="0.7" stroke-linejoin="round"/><polygon points="141.4,235.2 138.3,227.3 149.0,233.4" fill="#fcaa07" stroke="#fcaa07" stroke-width="0.7" stroke-linejoin="round"/><polygon points="138.3,227.3 135.3,217.7 143.6,221.3" fill="#fdb108" stroke="#fdb108" stroke-width="0.7" stroke-linejoin="round"/><polygon points="135.3,217.7 138.3,227.3 131.1,224.0" fill="#fdaf09" stroke="#fdaf09" stroke-width="0.7" stroke-linejoin="round"/><polygon points="138.3,227.3 141.4,235.2 133.5,236.4" fill="#fba608" stroke="#fba608" stroke-width="0.7" stroke-linejoin="round"/><polygon points="127.4,230.0 138.3,227.3 133.5,236.4" fill="#fba709" stroke="#fba709" stroke-width="0.7" stroke-linejoin="round"/><polygon points="131.1,224.0 138.3,227.3 127.4,230.0" fill="#fcab0a" stroke="#fcab0a" stroke-width="0.7" stroke-linejoin="round"/><polygon points="137.9,267.8 135.0,275.0 128.6,273.0" fill="#fca909" stroke="#fca909" stroke-width="0.7" stroke-linejoin="round"/><polygon points="142.5,276.5 135.0,275.0 137.9,267.8" fill="#fdb008" stroke="#fdb008" stroke-width="0.7" stroke-linejoin="round"/><polygon points="160.0,280.0 150.0,278.0 151.2,269.7" fill="#febb04" stroke="#febb04" stroke-width="0.7" stroke-linejoin="round"/><polygon points="150.0,278.0 142.5,276.5 151.2,269.7" fill="#fdb406" stroke="#fdb406" stroke-width="0.7" stroke-linejoin="round"/><polygon points="150.0,278.0 160.0,280.0 150.1,291.2" fill="#e38201" stroke="#e38201" stroke-width="0.7" stroke-linejoin="round"/><polygon points="243.8,304.7 237.8,313.1 231.6,306.4" fill="#ca6f01" stroke="#ca6f01" stroke-width="0.7" stroke-linejoin="round"/><polygon points="246.3,312.0 237.8,313.1 243.8,304.7" fill="#c66c01" stroke="#c66c01" stroke-width="0.7" stroke-linejoin="round"/><polygon points="237.8,313.1 230.0,313.7 231.6,306.4" fill="#b85f01" stroke="#b85f01" stroke-width="0.7" stroke-linejoin="round"/><polygon points="237.8,313.1 246.3,312.0 243.3,319.1" fill="#cc7101" stroke="#cc7101" stroke-width="0.7" stroke-linejoin="round"/><polygon points="237.8,313.1 243.3,319.1 231.6,322.6" fill="#c46a01" stroke="#c46a01" stroke-width="0.7" stroke-linejoin="round"/><polygon points="230.0,313.7 237.8,313.1 231.6,322.6" fill="#d07501" stroke="#d07501" stroke-width="0.7" stroke-linejoin="round"/><polygon points="269.3,300.0 266.5,307.4 258.9,298.1" fill="#c96f01" stroke="#c96f01" stroke-width="0.7" stroke-linejoin="round"/><polygon points="251.5,303.7 266.5,307.4 254.9,314.4" fill="#d17601" stroke="#d17601" stroke-width="0.7" stroke-linejoin="round"/><polygon points="258.9,298.1 266.5,307.4 251.5,303.7" fill="#c66b01" stroke="#c66b01" stroke-width="0.7" stroke-linejoin="round"/><polygon points="266.5,307.4 278.1,300.5 254.9,314.4" fill="#c86e01" stroke="#c86e01" stroke-width="0.7" stroke-linejoin="round"/><polygon points="266.5,307.4 269.3,300.0 278.1,300.5" fill="#c56b01" stroke="#c56b01" stroke-width="0.7" stroke-linejoin="round"/><polygon points="235.7,297.1 230.0,288.0 240.0,285.5" fill="#e48301" stroke="#e48301" stroke-width="0.7" stroke-linejoin="round"/><polygon points="224.3,295.6 230.0,288.0 235.7,297.1" fill="#d17301" stroke="#d17301" stroke-width="0.7" stroke-linejoin="round"/><polygon points="230.0,288.0 224.3,295.6 220.0,288.8" fill="#eb8a01" stroke="#eb8a01" stroke-width="0.7" stroke-linejoin="round"/><polygon points="225.3,274.0 230.0,288.0 220.0,288.8" fill="#ffbf00" stroke="#ffbf00" stroke-width="0.7" stroke-linejoin="round"/><polygon points="230.0,288.0 225.3,274.0 237.1,274.6" fill="#ffc200" stroke="#ffc200" stroke-width="0.7" stroke-linejoin="round"/><polygon points="240.0,285.5 230.0,288.0 237.1,274.6" fill="#ffbf00" stroke="#ffbf00" stroke-width="0.7" stroke-linejoin="round"/><polygon points="247.7,209.4 231.1,204.7 249.1,193.7" fill="#feb602" stroke="#feb602" stroke-width="0.7" stroke-linejoin="round"/><polygon points="252.3,202.2 247.7,209.4 249.1,193.7" fill="#fba706" stroke="#fba706" stroke-width="0.7" stroke-linejoin="round"/><polygon points="231.1,204.7 247.7,209.4 230.8,216.9" fill="#ffc000" stroke="#ffc000" stroke-width="0.7" stroke-linejoin="round"/><polygon points="263.3,201.1 252.3,202.2 258.0,194.9" fill="#f5910b" stroke="#f5910b" stroke-width="0.7" stroke-linejoin="round"/><polygon points="263.3,201.1 272.1,198.8 267.2,209.6" fill="#f3930d" stroke="#f3930d" stroke-width="0.7" stroke-linejoin="round"/><polygon points="272.1,198.8 263.3,201.1 266.3,193.0" fill="#ef860f" stroke="#ef860f" stroke-width="0.7" stroke-linejoin="round"/><polygon points="263.3,201.1 258.0,194.9 266.3,193.0" fill="#f0810d" stroke="#f0810d" stroke-width="0.7" stroke-linejoin="round"/><polygon points="219.4,184.9 207.5,180.1 219.9,171.8" fill="#ffba00" stroke="#ffba00" stroke-width="0.7" stroke-linejoin="round"/><polygon points="235.9,185.3 219.4,184.9 219.9,171.8" fill="#ffbc00" stroke="#ffbc00" stroke-width="0.7" stroke-linejoin="round"/><polygon points="219.4,184.9 202.5,191.1 207.5,180.1" fill="#ffc000" stroke="#ffc000" stroke-width="0.7" stroke-linejoin="round"/><polygon points="220.9,222.2 217.9,233.7 204.4,225.6" fill="#ffc000" stroke="#ffc000" stroke-width="0.7" stroke-linejoin="round"/><polygon points="216.1,212.2 220.9,222.2 204.4,225.6" fill="#ffc200" stroke="#ffc200" stroke-width="0.7" stroke-linejoin="round"/><polygon points="220.9,222.2 216.1,212.2 230.8,216.9" fill="#ffc000" stroke="#ffc000" stroke-width="0.7" stroke-linejoin="round"/><polygon points="229.3,237.6 220.9,222.2 230.8,216.9" fill="#ffc100" stroke="#ffc100" stroke-width="0.7" stroke-linejoin="round"/><polygon points="217.9,233.7 220.9,222.2 229.3,237.6" fill="#ffc000" stroke="#ffc000" stroke-width="0.7" stroke-linejoin="round"/><polygon points="254.5,227.6 240.7,223.3 248.4,217.4" fill="#febb02" stroke="#febb02" stroke-width="0.7" stroke-linejoin="round"/><polygon points="240.7,223.3 229.3,237.6 230.8,216.9" fill="#ffc300" stroke="#ffc300" stroke-width="0.7" stroke-linejoin="round"/><polygon points="247.7,209.4 240.7,223.3 230.8,216.9" fill="#ffc000" stroke="#ffc000" stroke-width="0.7" stroke-linejoin="round"/><polygon points="240.7,223.3 247.7,209.4 248.4,217.4" fill="#feb902" stroke="#feb902" stroke-width="0.7" stroke-linejoin="round"/><polygon points="288.3,279.6 293.9,285.4 282.8,287.4" fill="#ca6e01" stroke="#ca6e01" stroke-width="0.7" stroke-linejoin="round"/><polygon points="293.9,285.4 289.8,292.3 282.8,287.4" fill="#ce7201" stroke="#ce7201" stroke-width="0.7" stroke-linejoin="round"/><polygon points="289.8,292.3 293.9,285.4 304.9,266.7" fill="#cb6f01" stroke="#cb6f01" stroke-width="0.7" stroke-linejoin="round"/><polygon points="284.0,296.4 276.8,293.1 282.8,287.4" fill="#d57901" stroke="#d57901" stroke-width="0.7" stroke-linejoin="round"/><polygon points="289.8,292.3 284.0,296.4 282.8,287.4" fill="#cb7001" stroke="#cb7001" stroke-width="0.7" stroke-linejoin="round"/><polygon points="276.8,293.1 284.0,296.4 278.1,300.5" fill="#c46a01" stroke="#c46a01" stroke-width="0.7" stroke-linejoin="round"/><polygon points="284.0,296.4 289.8,292.3 278.1,300.5" fill="#ba6101" stroke="#ba6101" stroke-width="0.7" stroke-linejoin="round"/><polygon points="301.2,233.7 293.2,235.4 297.1,227.9" fill="#f0910f" stroke="#f0910f" stroke-width="0.7" stroke-linejoin="round"/><polygon points="293.2,235.4 301.2,233.7 297.9,242.9" fill="#f08d0f" stroke="#f08d0f" stroke-width="0.7" stroke-linejoin="round"/><polygon points="301.2,233.7 305.8,245.3 297.9,242.9" fill="#ef8f0f" stroke="#ef8f0f" stroke-width="0.7" stroke-linejoin="round"/><polygon points="290.7,259.9 290.0,269.0 279.2,263.7" fill="#f59f0c" stroke="#f59f0c" stroke-width="0.7" stroke-linejoin="round"/><polygon points="290.7,259.9 290.9,247.6 298.6,253.4" fill="#f28b0d" stroke="#f28b0d" stroke-width="0.7" stroke-linejoin="round"/><polygon points="290.0,269.0 290.7,259.9 298.0,265.0" fill="#f3980d" stroke="#f3980d" stroke-width="0.7" stroke-linejoin="round"/><polygon points="290.7,259.9 298.6,253.4 298.0,265.0" fill="#f2910d" stroke="#f2910d" stroke-width="0.7" stroke-linejoin="round"/><polygon points="200.0,288.2 210.0,289.5 207.5,296.6" fill="#e98801" stroke="#e98801" stroke-width="0.7" stroke-linejoin="round"/><polygon points="213.0,301.9 210.0,289.5 220.0,288.8" fill="#f08e01" stroke="#f08e01" stroke-width="0.7" stroke-linejoin="round"/><polygon points="207.5,296.6 210.0,289.5 213.0,301.9" fill="#e98801" stroke="#e98801" stroke-width="0.7" stroke-linejoin="round"/><polygon points="210.0,289.5 209.0,272.9 220.0,288.8" fill="#ffc200" stroke="#ffc200" stroke-width="0.7" stroke-linejoin="round"/><polygon points="210.0,289.5 200.0,288.2 209.0,272.9" fill="#febc00" stroke="#febc00" stroke-width="0.7" stroke-linejoin="round"/><polygon points="135.6,283.5 135.0,275.0 142.5,276.5" fill="#dc7c01" stroke="#dc7c01" stroke-width="0.7" stroke-linejoin="round"/><polygon points="135.0,275.0 135.6,283.5 128.6,273.0" fill="#e48301" stroke="#e48301" stroke-width="0.7" stroke-linejoin="round"/><polygon points="150.0,278.0 145.3,284.3 142.5,276.5" fill="#f08e01" stroke="#f08e01" stroke-width="0.7" stroke-linejoin="round"/><polygon points="135.6,283.5 145.3,284.3 142.6,292.8" fill="#df8001" stroke="#df8001" stroke-width="0.7" stroke-linejoin="round"/><polygon points="145.3,284.3 135.6,283.5 142.5,276.5" fill="#d77801" stroke="#d77801" stroke-width="0.7" stroke-linejoin="round"/><polygon points="142.6,292.8 145.3,284.3 150.1,291.2" fill="#de7f01" stroke="#de7f01" stroke-width="0.7" stroke-linejoin="round"/><polygon points="145.3,284.3 150.0,278.0 150.1,291.2" fill="#cf7101" stroke="#cf7101" stroke-width="0.7" stroke-linejoin="round"/><polygon points="258.1,208.9 255.4,220.2 248.4,217.4" fill="#fca805" stroke="#fca805" stroke-width="0.7" stroke-linejoin="round"/><polygon points="247.7,209.4 258.1,208.9 248.4,217.4" fill="#fcaa05" stroke="#fcaa05" stroke-width="0.7" stroke-linejoin="round"/><polygon points="267.2,217.6 258.1,208.9 267.2,209.6" fill="#f8a009" stroke="#f8a009" stroke-width="0.7" stroke-linejoin="round"/><polygon points="255.4,220.2 258.1,208.9 267.2,217.6" fill="#fba608" stroke="#fba608" stroke-width="0.7" stroke-linejoin="round"/><polygon points="258.1,208.9 247.7,209.4 252.3,202.2" fill="#fcac06" stroke="#fcac06" stroke-width="0.7" stroke-linejoin="round"/><polygon points="258.1,208.9 263.3,201.1 267.2,209.6" fill="#f6950a" stroke="#f6950a" stroke-width="0.7" stroke-linejoin="round"/><polygon points="263.3,201.1 258.1,208.9 252.3,202.2" fill="#fbaf09" stroke="#fbaf09" stroke-width="0.7" stroke-linejoin="round"/><polygon points="219.2,200.5 235.9,185.3 231.1,204.7" fill="#ffc400" stroke="#ffc400" stroke-width="0.7" stroke-linejoin="round"/><polygon points="219.2,200.5 219.4,184.9 235.9,185.3" fill="#ffc100" stroke="#ffc100" stroke-width="0.7" stroke-linejoin="round"/><polygon points="216.1,212.2 219.2,200.5 231.1,204.7" fill="#ffbf00" stroke="#ffbf00" stroke-width="0.7" stroke-linejoin="round"/><polygon points="219.4,184.9 219.2,200.5 202.5,191.1" fill="#ffc100" stroke="#ffc100" stroke-width="0.7" stroke-linejoin="round"/><polygon points="202.5,191.1 219.2,200.5 205.0,211.0" fill="#ffc000" stroke="#ffc000" stroke-width="0.7" stroke-linejoin="round"/><polygon points="219.2,200.5 216.1,212.2 205.0,211.0" fill="#ffbf00" stroke="#ffbf00" stroke-width="0.7" stroke-linejoin="round"/><polygon points="248.6,232.7 240.7,223.3 254.5,227.6" fill="#fdb302" stroke="#fdb302" stroke-width="0.7" stroke-linejoin="round"/><polygon points="245.8,240.5 248.6,232.7 252.3,244.7" fill="#ffc000" stroke="#ffc000" stroke-width="0.7" stroke-linejoin="round"/><polygon points="229.3,237.6 248.6,232.7 245.8,240.5" fill="#ffbf00" stroke="#ffbf00" stroke-width="0.7" stroke-linejoin="round"/><polygon points="240.7,223.3 248.6,232.7 229.3,237.6" fill="#ffc000" stroke="#ffc000" stroke-width="0.7" stroke-linejoin="round"/><polygon points="248.6,232.7 262.0,241.3 252.3,244.7" fill="#feba03" stroke="#feba03" stroke-width="0.7" stroke-linejoin="round"/><polygon points="262.0,241.3 248.6,232.7 261.9,230.2" fill="#feb604" stroke="#feb604" stroke-width="0.7" stroke-linejoin="round"/><polygon points="248.6,232.7 254.5,227.6 261.9,230.2" fill="#feb904" stroke="#feb904" stroke-width="0.7" stroke-linejoin="round"/><polygon points="304.9,266.7 297.9,278.4 298.0,265.0" fill="#d97a01" stroke="#d97a01" stroke-width="0.7" stroke-linejoin="round"/><polygon points="293.9,285.4 297.9,278.4 304.9,266.7" fill="#d47701" stroke="#d47701" stroke-width="0.7" stroke-linejoin="round"/><polygon points="297.9,278.4 290.0,269.0 298.0,265.0" fill="#da7b01" stroke="#da7b01" stroke-width="0.7" stroke-linejoin="round"/><polygon points="297.9,278.4 288.3,279.6 290.0,269.0" fill="#eb8a01" stroke="#eb8a01" stroke-width="0.7" stroke-linejoin="round"/><polygon points="297.9,278.4 293.9,285.4 288.3,279.6" fill="#e28301" stroke="#e28301" stroke-width="0.7" stroke-linejoin="round"/><polygon points="290.9,247.6 285.6,254.4 277.2,248.7" fill="#f69b0b" stroke="#f69b0b" stroke-width="0.7" stroke-linejoin="round"/><polygon points="290.7,259.9 285.6,254.4 290.9,247.6" fill="#f5980c" stroke="#f5980c" stroke-width="0.7" stroke-linejoin="round"/><polygon points="285.6,254.4 290.7,259.9 279.2,263.7" fill="#f48d0b" stroke="#f48d0b" stroke-width="0.7" stroke-linejoin="round"/><polygon points="273.6,257.8 285.6,254.4 279.2,263.7" fill="#f9a60a" stroke="#f9a60a" stroke-width="0.7" stroke-linejoin="round"/><polygon points="285.6,254.4 273.6,257.8 277.2,248.7" fill="#f7980a" stroke="#f7980a" stroke-width="0.7" stroke-linejoin="round"/></g>
</svg>
<div class="edgeL"></div><div class="edgeT"></div>
</div>
<div id="split"></div><div id="topw"></div>
<div id="pn">
<span class="t " style="left:449px;top:8.8px">Model Name:</span>
<div class="inp" style="left:500px;top:7.5px;width:99px;height:14.4px"><span class="t v">bennu13</span></div>
<div class="gb" style="left:450px;top:39.3px;width:149.4px;height:95.6px"></div>
<div class="gl" style="left:454px;top:33.3px;width:60px;height:12px"></div>
<span class="t " style="left:455.5px;top:32.2px">Change Position</span>
<span class="t " style="left:458.1px;top:53.6px">X Offset</span>
<div class="sp" style="left:499px;top:52.3px;width:50.6px;height:14.7px"><span class="t v">139.85</span><i class="ar"><b class="u"></b><b class="d"></b></i></div>
<span class="t " style="left:554px;top:53.6px">mm</span>
<span class="t " style="left:458.1px;top:73.0px">Y Offset</span>
<div class="sp" style="left:499px;top:71.65px;width:50.6px;height:14.7px"><span class="t v">141.70</span><i class="ar"><b class="u"></b><b class="d"></b></i></div>
<span class="t " style="left:554px;top:73.0px">mm</span>
<span class="t " style="left:458.1px;top:92.3px">Z Offset</span>
<div class="sp" style="left:499px;top:91.0px;width:50.6px;height:14.7px"><span class="t v">0.00</span><i class="ar"><b class="u"></b><b class="d"></b></i></div>
<span class="t " style="left:554px;top:92.3px">mm</span>
<div class="btn" style="left:458.7px;top:111.1px;width:130.1px;height:14.4px"><span class="t c">Reset Position</span></div>
<div class="gb" style="left:450px;top:152.8px;width:149.4px;height:126.3px"></div>
<div class="gl" style="left:454px;top:146.8px;width:57px;height:12px"></div>
<span class="t " style="left:455.5px;top:145.7px">Change Scaling</span>
<span class="t " style="left:485.3px;top:164.7px">Size (mm)</span>
<span class="t " style="left:543.5px;top:164.7px">Scale (%)</span>
<span class="t " style="left:458.2px;top:181.3px">X</span>
<div class="sp" style="left:477px;top:180.0px;width:51.7px;height:14.6px"><span class="t v">198.30</span><i class="ar"><b class="u"></b><b class="d"></b></i></div>
<div class="sp" style="left:532.5px;top:180.0px;width:56.7px;height:14.6px"><span class="t v">100.00</span><i class="ar"><b class="u"></b><b class="d"></b></i></div>
<span class="t " style="left:458.2px;top:200.7px">Y</span>
<div class="sp" style="left:477px;top:199.4px;width:51.7px;height:14.6px"><span class="t v">187.60</span><i class="ar"><b class="u"></b><b class="d"></b></i></div>
<div class="sp" style="left:532.5px;top:199.4px;width:56.7px;height:14.6px"><span class="t v">100.00</span><i class="ar"><b class="u"></b><b class="d"></b></i></div>
<span class="t " style="left:458.2px;top:220.1px">Z</span>
<div class="sp" style="left:477px;top:218.8px;width:51.7px;height:14.6px"><span class="t v">178.10</span><i class="ar"><b class="u"></b><b class="d"></b></i></div>
<div class="sp" style="left:532.5px;top:218.8px;width:56.7px;height:14.6px"><span class="t v">100.00</span><i class="ar"><b class="u"></b><b class="d"></b></i></div>
<div class="cb" style="left:458.1px;top:239.7px"><svg width="10" height="10" viewBox="0 0 10 10"><path d="M2,5 L4.2,7.4 L8.2,2.4" fill="none" stroke="#222" stroke-width="1.1"/></svg></div>
<span class="t " style="left:471.5px;top:238.4px">Uniform Scaling</span>
<div class="btn" style="left:458.7px;top:255.7px;width:130.1px;height:14.6px"><span class="t c">Reset Scale</span></div>
<div class="gb" style="left:450px;top:297.5px;width:149.4px;height:95.3px"></div>
<div class="gl" style="left:454px;top:291.5px;width:63.5px;height:12px"></div>
<span class="t " style="left:455.5px;top:290.4px">Change Rotation</span>
<span class="t " style="left:458.1px;top:312.2px">X Rotation</span>
<div class="sp" style="left:500.8px;top:310.9px;width:46.7px;height:14.6px"><span class="t v">0.00</span><i class="ar"><b class="u"></b><b class="d"></b></i></div>
<span class="t " style="left:552px;top:312.2px">deg</span>
<span class="t " style="left:458.1px;top:331.5px">Y Rotation</span>
<div class="sp" style="left:500.8px;top:330.2px;width:46.7px;height:14.6px"><span class="t v">0.00</span><i class="ar"><b class="u"></b><b class="d"></b></i></div>
<span class="t " style="left:552px;top:331.5px">deg</span>
<span class="t " style="left:458.1px;top:350.8px">Z Rotation</span>
<div class="sp" style="left:500.8px;top:349.5px;width:46.7px;height:14.6px"><span class="t v">0.00</span><i class="ar"><b class="u"></b><b class="d"></b></i></div>
<span class="t " style="left:552px;top:350.8px">deg</span>
<div class="btn" style="left:458.7px;top:369.3px;width:130.1px;height:14.7px"><span class="t c">Reset Rotation</span></div>
</div>
</div>
</body></html>
